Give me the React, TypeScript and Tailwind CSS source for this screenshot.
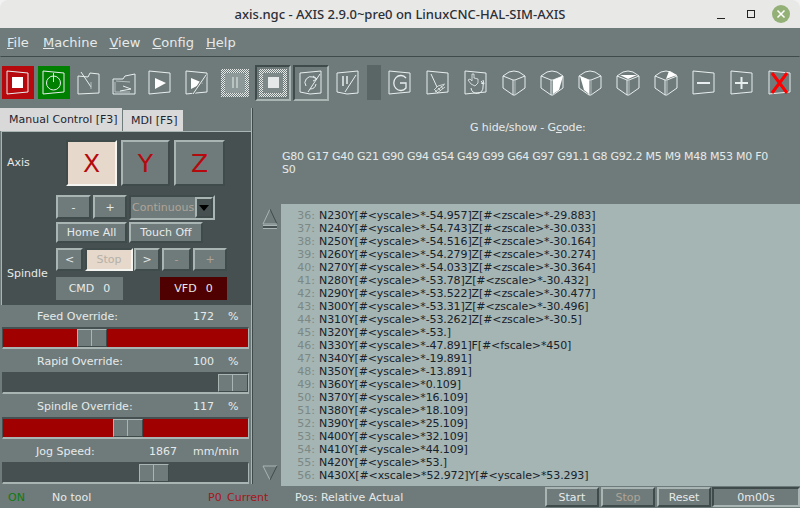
import type { ReactNode } from "react"

const raised = "border-2 border-t-[#a9b5b3] border-l-[#a9b5b3] border-r-[#3f4a4a] border-b-[#3f4a4a]"
const sunken = "border-2 border-t-[#3f4a4a] border-l-[#3f4a4a] border-r-[#a9b5b3] border-b-[#a9b5b3]"
const checker = "bg-[repeating-conic-gradient(#e4e9e8_0_25%,#6f7b7a_0_50%)] bg-[length:2px_2px]"

const lines: [number, string][] = [
  [36, "N230Y[#<yscale>*-54.957]Z[#<zscale>*-29.883]"],
  [37, "N240Y[#<yscale>*-54.743]Z[#<zscale>*-30.033]"],
  [38, "N250Y[#<yscale>*-54.516]Z[#<zscale>*-30.164]"],
  [39, "N260Y[#<yscale>*-54.279]Z[#<zscale>*-30.274]"],
  [40, "N270Y[#<yscale>*-54.033]Z[#<zscale>*-30.364]"],
  [41, "N280Y[#<yscale>*-53.78]Z[#<zscale>*-30.432]"],
  [42, "N290Y[#<yscale>*-53.522]Z[#<zscale>*-30.477]"],
  [43, "N300Y[#<yscale>*-53.31]Z[#<zscale>*-30.496]"],
  [44, "N310Y[#<yscale>*-53.262]Z[#<zscale>*-30.5]"],
  [45, "N320Y[#<yscale>*-53.]"],
  [46, "N330Y[#<yscale>*-47.891]F[#<fscale>*450]"],
  [47, "N340Y[#<yscale>*-19.891]"],
  [48, "N350Y[#<yscale>*-13.891]"],
  [49, "N360Y[#<yscale>*0.109]"],
  [50, "N370Y[#<yscale>*16.109]"],
  [51, "N380Y[#<yscale>*18.109]"],
  [52, "N390Y[#<yscale>*25.109]"],
  [53, "N400Y[#<yscale>*32.109]"],
  [54, "N410Y[#<yscale>*44.109]"],
  [55, "N420Y[#<yscale>*53.]"],
  [56, "N430X[#<xscale>*52.972]Y[#<yscale>*53.293]"],
]

// tilted page outlines used by the toolbar bitmaps
const frameA = "M2 2 L23 4 L23 23 L12 24 L2 25 Z"
const frameB = "M2 4 L23 2 L23 24 L12 25 L2 23 Z"

function Icon({ children, frame = frameA }: { children?: ReactNode; frame?: string | null }) {
  return (
    <svg width="26" height="27" viewBox="0 0 26 27" fill="none" stroke="#e8eeee" strokeWidth="1">
      {frame && <path d={frame} />}
      {children}
    </svg>
  )
}

function Cube({ children }: { children?: ReactNode }) {
  return (
    <svg width="26" height="27" viewBox="0 0 26 27" fill="none" stroke="#e8eeee" strokeWidth="1">
      <path d="M2 7 L8 3 Q13 1 18 3 L24 7 L24 19 L14 26 L12 26 L2 19 Z" />
      <path d="M2 7 L12 11 L14 11 L24 7" />
      <path d="M12 11 L12 26" />
      <path d="M14 11 L14 26" stroke="#b4bfbe" />
      {children}
    </svg>
  )
}

function Slot({ w = "w-[38px]", children }: { w?: string; children?: ReactNode }) {
  return <div className={`${w} h-[36px] flex items-center justify-center shrink-0`}>{children}</div>
}

function Toolbar() {
  return (
    <div className="h-[51px] flex items-center">
      <Slot w="w-[36px]">
        <div className="w-[32px] h-[33px] bg-[#b5090d] flex items-center justify-center">
          <Icon><rect x="7" y="8" width="11" height="11" fill="#fff" stroke="none" /></Icon>
        </div>
      </Slot>
      <Slot w="w-[36px]">
        <div className="w-[32px] h-[33px] bg-[#008000] flex items-center justify-center">
          <Icon><circle cx="12.5" cy="14" r="7" /><path d="M12.5 4 L12.5 13" /></Icon>
        </div>
      </Slot>
      <Slot w="w-[34px]">
        <Icon frame="M2 7 L2 25 L23 24 L23 5 L14 4 L12 8 Z">
          <path d="M5 3 L15 18" />
          <path d="M15 13 L15 20" stroke="#b4bfbe" />
        </Icon>
      </Slot>
      <Slot w="w-[35px]">
        <Icon frame="M2 10 L12 10 L14 7 L24 5 L24 25 L2 25 Z">
          <path d="M4 13 L4 23 L19 23 M5 12 L19 13" stroke="#b4bfbe" />
          <path d="M12 17 L20 20 L9 22" />
        </Icon>
      </Slot>
      <Slot w="w-[37px]">
        <Icon><path d="M8 9 L19 14 L8 20 Z" fill="#fff" stroke="none" /></Icon>
      </Slot>
      <Slot>
        <Icon frame={frameA}>
          <path d="M7 9 L19 14 L7 20 Z" fill="#fff" stroke="none" />
          <path d="M22 6 L9 25" stroke="#6f7b7a" strokeWidth="3" />
          <path d="M22 6 L9 25" />
        </Icon>
      </Slot>
      <Slot>
        <div className={`w-[28px] h-[28px] ${checker} flex items-center justify-center`}>
          <div className="w-[20px] h-[20px] bg-[#8d9998] flex items-center justify-center gap-[2px]">
            <div className="w-[2px] h-[11px] bg-[#b9c3c2]" />
            <div className="w-[2px] h-[11px] bg-[#b9c3c2]" />
          </div>
        </div>
      </Slot>
      <Slot>
        <div className={`w-[36px] h-[36px] flex items-center justify-center ${sunken}`}>
          <div className={`w-[28px] h-[28px] ${checker} flex items-center justify-center`}>
            <div className="w-[20px] h-[20px] bg-[#7d8988] flex items-center justify-center">
              <div className="w-[11px] h-[11px] bg-[#e4e8e8]" />
            </div>
          </div>
        </div>
      </Slot>
      <Slot w="w-[37px]">
        <div className={`w-[36px] h-[36px] flex items-center justify-center ${sunken}`}>
          <Icon frame={frameB}>
            <path d="M8 17 A6 6 0 0 1 15 8 L19 10 M15 7 L19 10 L15 12" />
            <path d="M22 5 L10 23" />
            <path d="M18 15 A6 6 0 0 1 12 20" />
          </Icon>
        </div>
      </Slot>
      <Slot>
        <Icon frame={frameB}>
          <path d="M8 7 L8 17 M12 7 L12 15" strokeWidth="1.5" />
          <path d="M21 6 L10 23" />
        </Icon>
      </Slot>
      <div className="w-[14px] h-[35px] bg-[#5a6665] shrink-0" />
      <Slot>
        <Icon><path d="M19 9 A7 7.5 0 1 0 19 19 L19 14 L13 14" strokeWidth="1.3" /></Icon>
      </Slot>
      <Slot>
        <Icon>
          <path d="M6 5 L12 18" />
          <path d="M9 21 L13 17 L20 15 M10 23 L19 16 M12 24 L20 18 M10 21 L13 24 M13 19 L16 22 M16 17 L18 20" strokeWidth="0.8" />
        </Icon>
      </Slot>
      <Slot>
        <Icon>
          <path d="M8 15 L5 11 L7 10 L9 12 L9 5 L11 5 L11 9 L15 10 L15 14 L12 17 Z" strokeWidth="0.8" />
          <path d="M8 19 A6 6 0 0 0 20 18 A5 5 0 0 0 18 12 M20 11 L21 15 L18 14" />
        </Icon>
      </Slot>
      <Slot><Cube /></Slot>
      <Slot><Cube><path d="M14 11 L24 7 L20 21 L14 25 Z" fill="#fff" stroke="none" /></Cube></Slot>
      <Slot><Cube><path d="M12 11 L3 7 L7 21 L12 25 Z" fill="#fff" stroke="none" /></Cube></Slot>
      <Slot><Cube><path d="M5 6 L22 6 L13 10 Z" fill="#fff" stroke="none" /></Cube></Slot>
      <Slot><Cube><path d="M13 10 L16 2 L24 6 Z" fill="#fff" stroke="none" /></Cube></Slot>
      <Slot><Icon><path d="M6 14 L19 14" strokeWidth="2" /></Icon></Slot>
      <Slot><Icon><path d="M6 14 L19 14 M12.5 8 L12.5 20" strokeWidth="2" /></Icon></Slot>
      <Slot>
        <Icon><path d="M5 4 L20 24 M20 4 L5 24" stroke="#ff0000" strokeWidth="3" /></Icon>
      </Slot>
    </div>
  )
}

function Btn({ cls, children, dim }: { cls: string; children: ReactNode; dim?: boolean }) {
  return (
    <div className={`${raised} flex items-center justify-center bg-[#6f7b7a] ${dim ? "text-[#b0a498]" : "text-[#e6eaea]"} ${cls}`}>
      {children}
    </div>
  )
}

function AxisBtn({ label, active, cls }: { label: string; active?: boolean; cls: string }) {
  return (
    <div
      className={`h-[46px] flex items-center justify-center text-[25px] text-[#b5090d] ${cls} ${
        active ? "border-2 border-t-[#3f4a4a] border-l-[#3f4a4a] border-r-[#f4f4f0] border-b-[#f4f4f0] bg-[#e6d8ca]" : `${raised} bg-[#6f7b7a]`
      }`}
    >
      {label}
    </div>
  )
}

function ManualPanel() {
  return (
    <div className="flex flex-col">
      {/* tabs */}
      <div className="h-[23px] flex items-end">
        <div className="w-[122px] h-[23px] bg-[#d9d9d9] text-[#1d2530] flex items-center pl-[9px]">Manual Control [F3]</div>
        <div className="w-[60px] h-[21px] ml-[1px] bg-[#d9d9d9] text-[#1d2530] flex items-center pl-[8px]">MDI [F5]</div>
      </div>
      <div className="w-[250px] h-[174px] ml-[1px] bg-[#465050] border border-[#a9b5b3] border-r-0 border-b-0 flex flex-col">
        <div className="flex h-[46px] mt-[8px]">
          <div className="w-[64px] pl-[5px] pt-[17px]">Axis</div>
          <AxisBtn label="X" active cls="w-[51px]" />
          <AxisBtn label="Y" cls="w-[49px] ml-[4px]" />
          <AxisBtn label="Z" cls="w-[51px] ml-[4px]" />
        </div>
        <div className="flex mt-[9px] ml-[54px] h-[25px]">
          <Btn cls="w-[35px] h-[24px]">-</Btn>
          <Btn cls="w-[34px] h-[24px] ml-[2px]">+</Btn>
          <div className={`w-[86px] h-[25px] ml-[2px] bg-[#6f7b7a] ${sunken} flex items-center justify-between text-[#b0a498]`}>
            <span className="pl-[1px]">Continuous</span>
            <div className={`w-[18px] h-[21px] ${raised} bg-[#465050] flex items-center justify-center`}>
              <svg width="10" height="6" viewBox="0 0 10 6"><path d="M0 0 L10 0 L5 6 Z" fill="#000" /></svg>
            </div>
          </div>
        </div>
        <div className="flex mt-[2px] ml-[54px] h-[21px]">
          <Btn cls="w-[71px]">Home All</Btn>
          <Btn cls="w-[74px] ml-[2px]">Touch Off</Btn>
        </div>
        <div className="flex mt-[5px] ml-[54px] h-[23px]">
          <Btn cls="w-[27px]">&lt;</Btn>
          <div className="w-[48px] ml-[2px] border-2 border-t-[#3f4a4a] border-l-[#3f4a4a] border-r-[#f4f4f0] border-b-[#f4f4f0] bg-[#e6d8ca] text-[#b5b0a8] flex items-center justify-center">Stop</div>
          <Btn cls="w-[26px] ml-[1px]">&gt;</Btn>
          <Btn dim cls="w-[29px] ml-[2px]">-</Btn>
          <Btn dim cls="w-[34px] ml-[2px]">+</Btn>
        </div>
        <div className="flex mt-[6px] h-[23px] relative">
          <div className="absolute left-[5px] top-[-9px]">Spindle</div>
          <div className="ml-[54px] w-[67px] bg-[#6d7a79] flex items-center justify-center gap-[9px]"><span>CMD</span><span>0</span></div>
          <div className="ml-[37px] w-[67px] bg-[#4f0000] flex items-center justify-center gap-[9px]"><span>VFD</span><span>0</span></div>
        </div>
      </div>
    </div>
  )
}

function Slider({ label, value, unit, thumb, red, wide }: { label: string; value: string; unit: string; thumb: string; red?: boolean; wide?: boolean }) {
  return (
    <div className="h-[45px] flex flex-col">
      <div className="h-[22px] relative flex items-center">
        <span className={wide ? "ml-[36px]" : "ml-[37px]"}>{label}</span>
        <span className={`absolute top-[6px] ${wide ? "left-[149px]" : "left-[193px]"}`}>{value}</span>
        <span className={`absolute top-[6px] ${wide ? "left-[193px]" : "left-[228px]"}`}>{unit}</span>
      </div>
      <div className={`ml-[2px] w-[247px] h-[22px] border-t-2 border-b-2 border-l border-r border-t-[#465050] border-b-[#a9b5b3] border-l-[#465050] border-r-[#a9b5b3] ${red ? "bg-[#a00000]" : "bg-[#465050]"} flex`}>
        <div className={`${thumb} shrink-0`} />
        <div className={`w-[30px] h-[18px] shrink-0 flex bg-[#6f7b7a] ${raised} border-[1.5px]`}>
          <div className="w-1/2 border-r border-r-[#a9b5b3]" />
        </div>
      </div>
    </div>
  )
}

export default function App() {
  return (
    <div className="w-[800px] h-[508px] overflow-hidden bg-[#f2f2f2] text-[11px] leading-none text-[#e6eaea] flex flex-col" style={{ fontFamily: '"DejaVu Sans", sans-serif' }}>
      {/* title bar */}
      <div className="h-[28px] shrink-0 relative flex items-center justify-center text-[#2b2f36] text-[13px] font-medium bg-[#e8e8e7] rounded-t-[8px]" style={{ fontFamily: '"Noto Sans", sans-serif' }}>
        axis.ngc - AXIS 2.9.0~pre0 on LinuxCNC-HAL-SIM-AXIS
        <div className="absolute right-[10px] top-[5px] flex items-center">
          <div className="w-[8px] h-[1px] bg-[#222] mt-[8px] mr-[22px]" />
          <div className="w-[8px] h-[8px] border border-[#222] mr-[17px]" />
          <div className="w-[18px] h-[18px] rounded-full bg-[#93b077] flex items-center justify-center">
            <svg width="10" height="10" viewBox="0 0 10 10"><path d="M1.5 1.5 L8.5 8.5 M8.5 1.5 L1.5 8.5" stroke="#fff" strokeWidth="1.5" /></svg>
          </div>
        </div>
      </div>

      <div className="flex-1 bg-[#6f7b7a] flex flex-col min-h-0">
        {/* menu */}
        <div className="h-[29px] shrink-0 border border-[#6f7b7a] border-b-[#3f4a4a] flex items-center pl-[6px] gap-[12px] text-[13px]">
          <span className="w-[24px]"><u>F</u>ile</span>
          <span><u>M</u>achine</span>
          <span><u>V</u>iew</span>
          <span><u>C</u>onfig</span>
          <span><u>H</u>elp</span>
        </div>

        <Toolbar />

        <div className="flex flex-1 min-h-0">
          <div className="w-[252px] shrink-0 flex flex-col border-r border-r-[#a9b5b3]">
            <ManualPanel />
            <div>
              <Slider label="Feed Override:" value="172" unit="%" thumb="w-[74px]" red />
              <Slider label="Rapid Override:" value="100" unit="%" thumb="w-[215px]" />
              <Slider label="Spindle Override:" value="117" unit="%" thumb="w-[110px]" red />
              <Slider label="Jog Speed:" value="1867" unit="mm/min" thumb="w-[136px]" wide />
            </div>
          </div>

          <div className="flex-1 min-w-0 flex flex-col border-l border-l-[#3f4a4a]">
            <div className="h-[96px] shrink-0 pl-[29px] pt-[14px]">
              <div className="ml-[188px] tracking-[-0.1px]">G hide/show - G<u>c</u>ode:</div>
              <div className="mt-[17px] leading-[13px] w-[495px] tracking-[-0.25px]">
                G80 G17 G40 G21 G90 G94 G54 G49 G99 G64 G97 G91.1 G8 G92.2 M5 M9 M48 M53 M0 F0 S0
              </div>
            </div>
            <div className="flex-1 flex min-h-0">
              <div className="w-[28px] shrink-0 flex flex-col justify-between items-center pt-[4px] pb-[3px] pl-[5px]">
                <svg width="16" height="22" viewBox="0 0 16 22">
                  <path d="M8 1 L15 16 L1 16 Z" fill="#6f7b7a" />
                  <path d="M1 16 L8 1" stroke="#a9b5b3" fill="none" />
                  <path d="M8 1 L15 16" stroke="#3f4a4a" fill="none" />
                  <path d="M1 16 L15 16" stroke="#a9b5b3" fill="none" />
                  <rect x="1" y="17" width="14" height="4" fill="#a9b5b3" />
                  <rect x="1" y="18" width="14" height="2" fill="#465050" />
                </svg>
                <svg width="16" height="16" viewBox="0 0 16 16">
                  <path d="M8 15 L15 1 L1 1 Z" fill="#6f7b7a" />
                  <path d="M1 1 L15 1 M1 1 L8 15" stroke="#a9b5b3" fill="none" />
                  <path d="M15 1 L8 15" stroke="#3f4a4a" fill="none" />
                </svg>
              </div>
              <div className="w-[519px] h-[282px] bg-[#a5b5b3] pt-[5px] leading-[13px] text-[#17222b] overflow-hidden">
                {lines.map(([n, t]) => (
                  <div key={n} className="flex h-[13px]">
                    <span className="w-[34px] text-right text-[#7b8886] shrink-0">{n}:</span>
                    <span className="ml-[4px] whitespace-nowrap tracking-[-0.1px]">{t}</span>
                  </div>
                ))}
              </div>
            </div>
          </div>
        </div>

        {/* status bar */}
        <div className="h-[24px] shrink-0 relative flex items-center pt-[2px]">
          <span className="ml-[8px] w-[44px] text-[#0e7a0e]">ON</span>
          <span className="w-[156px]">No tool</span>
          <span className="text-[#a5161a] w-[19px]">P0</span>
          <span className="text-[#a5161a] w-[68px]">Current</span>
          <span className="w-[250px]">Pos: Relative Actual</span>
          <Btn cls="w-[54px] h-[20px]">Start</Btn>
          <Btn dim cls="w-[54px] h-[20px] ml-[2px]">Stop</Btn>
          <Btn cls="w-[54px] h-[20px] ml-[2px]">Reset</Btn>
          <div className={`w-[88px] h-[20px] ml-[1px] ${sunken} flex items-center justify-center`}>0m00s</div>
        </div>
      </div>
    </div>
  )
}
